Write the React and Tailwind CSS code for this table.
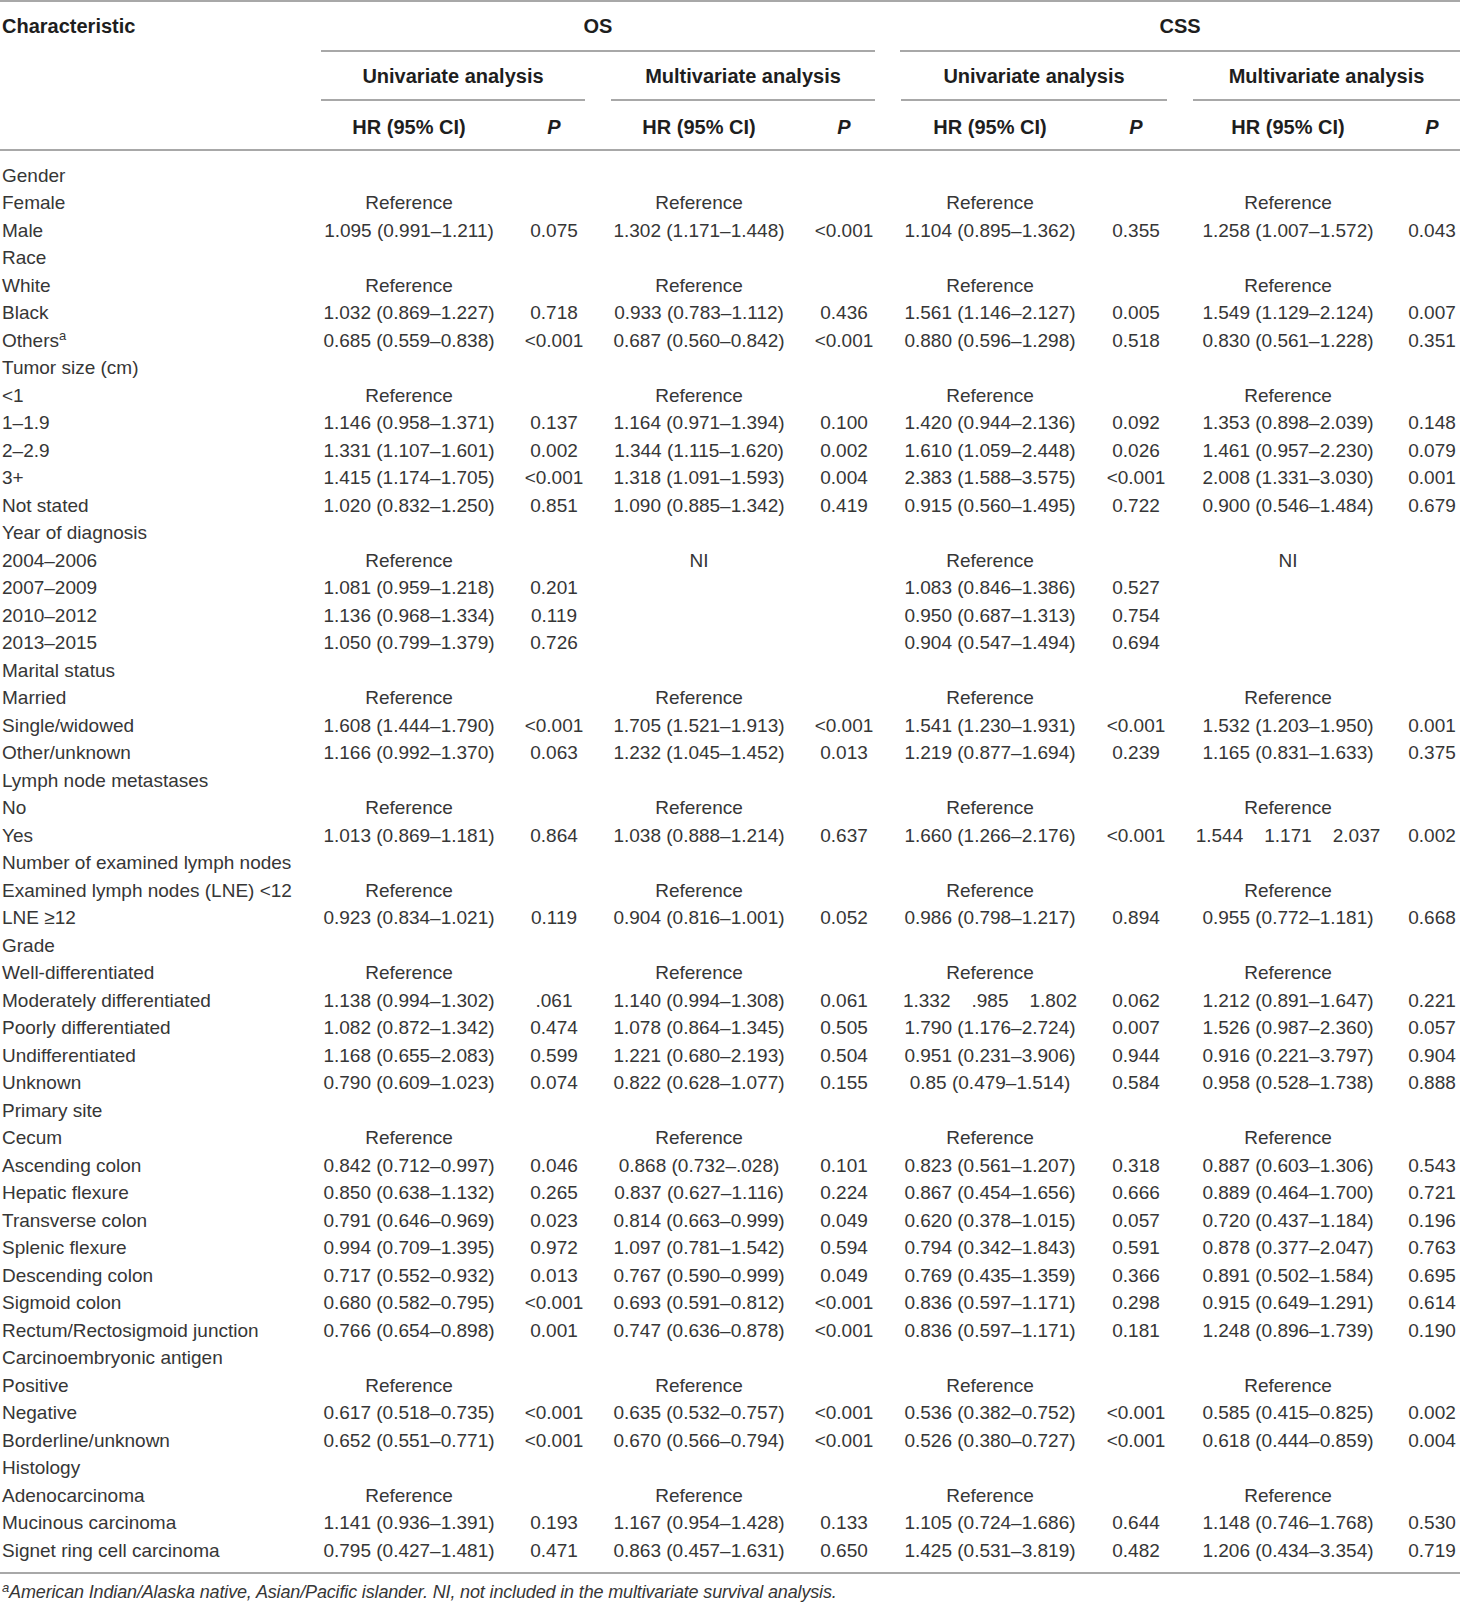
import React from 'react';

const cols = 'grid grid-cols-[308px_202px_88px_202px_88px_204px_88px_216px_64px]';

const REF = ['Reference', '', 'Reference', '', 'Reference', '', 'Reference', ''];

// label, values (null = section heading)
const rows = [
  ['Gender', null],
  ['Female', REF],
  ['Male', ['1.095 (0.991–1.211)', '0.075', '1.302 (1.171–1.448)', '<0.001', '1.104 (0.895–1.362)', '0.355', '1.258 (1.007–1.572)', '0.043']],
  ['Race', null],
  ['White', REF],
  ['Black', ['1.032 (0.869–1.227)', '0.718', '0.933 (0.783–1.112)', '0.436', '1.561 (1.146–2.127)', '0.005', '1.549 (1.129–2.124)', '0.007']],
  ['Others', ['0.685 (0.559–0.838)', '<0.001', '0.687 (0.560–0.842)', '<0.001', '0.880 (0.596–1.298)', '0.518', '0.830 (0.561–1.228)', '0.351'], 'a'],
  ['Tumor size (cm)', null],
  ['<1', REF],
  ['1–1.9', ['1.146 (0.958–1.371)', '0.137', '1.164 (0.971–1.394)', '0.100', '1.420 (0.944–2.136)', '0.092', '1.353 (0.898–2.039)', '0.148']],
  ['2–2.9', ['1.331 (1.107–1.601)', '0.002', '1.344 (1.115–1.620)', '0.002', '1.610 (1.059–2.448)', '0.026', '1.461 (0.957–2.230)', '0.079']],
  ['3+', ['1.415 (1.174–1.705)', '<0.001', '1.318 (1.091–1.593)', '0.004', '2.383 (1.588–3.575)', '<0.001', '2.008 (1.331–3.030)', '0.001']],
  ['Not stated', ['1.020 (0.832–1.250)', '0.851', '1.090 (0.885–1.342)', '0.419', '0.915 (0.560–1.495)', '0.722', '0.900 (0.546–1.484)', '0.679']],
  ['Year of diagnosis', null],
  ['2004–2006', ['Reference', '', 'NI', '', 'Reference', '', 'NI', '']],
  ['2007–2009', ['1.081 (0.959–1.218)', '0.201', '', '', '1.083 (0.846–1.386)', '0.527', '', '']],
  ['2010–2012', ['1.136 (0.968–1.334)', '0.119', '', '', '0.950 (0.687–1.313)', '0.754', '', '']],
  ['2013–2015', ['1.050 (0.799–1.379)', '0.726', '', '', '0.904 (0.547–1.494)', '0.694', '', '']],
  ['Marital status', null],
  ['Married', REF],
  ['Single/widowed', ['1.608 (1.444–1.790)', '<0.001', '1.705 (1.521–1.913)', '<0.001', '1.541 (1.230–1.931)', '<0.001', '1.532 (1.203–1.950)', '0.001']],
  ['Other/unknown', ['1.166 (0.992–1.370)', '0.063', '1.232 (1.045–1.452)', '0.013', '1.219 (0.877–1.694)', '0.239', '1.165 (0.831–1.633)', '0.375']],
  ['Lymph node metastases', null],
  ['No', REF],
  ['Yes', ['1.013 (0.869–1.181)', '0.864', '1.038 (0.888–1.214)', '0.637', '1.660 (1.266–2.176)', '<0.001', ['1.544', '1.171', '2.037'], '0.002']],
  ['Number of examined lymph nodes', null],
  ['Examined lymph nodes (LNE) <12', REF],
  ['LNE ≥12', ['0.923 (0.834–1.021)', '0.119', '0.904 (0.816–1.001)', '0.052', '0.986 (0.798–1.217)', '0.894', '0.955 (0.772–1.181)', '0.668']],
  ['Grade', null],
  ['Well-differentiated', REF],
  ['Moderately differentiated', ['1.138 (0.994–1.302)', '.061', '1.140 (0.994–1.308)', '0.061', ['1.332', '.985', '1.802'], '0.062', '1.212 (0.891–1.647)', '0.221']],
  ['Poorly differentiated', ['1.082 (0.872–1.342)', '0.474', '1.078 (0.864–1.345)', '0.505', '1.790 (1.176–2.724)', '0.007', '1.526 (0.987–2.360)', '0.057']],
  ['Undifferentiated', ['1.168 (0.655–2.083)', '0.599', '1.221 (0.680–2.193)', '0.504', '0.951 (0.231–3.906)', '0.944', '0.916 (0.221–3.797)', '0.904']],
  ['Unknown', ['0.790 (0.609–1.023)', '0.074', '0.822 (0.628–1.077)', '0.155', '0.85 (0.479–1.514)', '0.584', '0.958 (0.528–1.738)', '0.888']],
  ['Primary site', null],
  ['Cecum', REF],
  ['Ascending colon', ['0.842 (0.712–0.997)', '0.046', '0.868 (0.732–.028)', '0.101', '0.823 (0.561–1.207)', '0.318', '0.887 (0.603–1.306)', '0.543']],
  ['Hepatic flexure', ['0.850 (0.638–1.132)', '0.265', '0.837 (0.627–1.116)', '0.224', '0.867 (0.454–1.656)', '0.666', '0.889 (0.464–1.700)', '0.721']],
  ['Transverse colon', ['0.791 (0.646–0.969)', '0.023', '0.814 (0.663–0.999)', '0.049', '0.620 (0.378–1.015)', '0.057', '0.720 (0.437–1.184)', '0.196']],
  ['Splenic flexure', ['0.994 (0.709–1.395)', '0.972', '1.097 (0.781–1.542)', '0.594', '0.794 (0.342–1.843)', '0.591', '0.878 (0.377–2.047)', '0.763']],
  ['Descending colon', ['0.717 (0.552–0.932)', '0.013', '0.767 (0.590–0.999)', '0.049', '0.769 (0.435–1.359)', '0.366', '0.891 (0.502–1.584)', '0.695']],
  ['Sigmoid colon', ['0.680 (0.582–0.795)', '<0.001', '0.693 (0.591–0.812)', '<0.001', '0.836 (0.597–1.171)', '0.298', '0.915 (0.649–1.291)', '0.614']],
  ['Rectum/Rectosigmoid junction', ['0.766 (0.654–0.898)', '0.001', '0.747 (0.636–0.878)', '<0.001', '0.836 (0.597–1.171)', '0.181', '1.248 (0.896–1.739)', '0.190']],
  ['Carcinoembryonic antigen', null],
  ['Positive', REF],
  ['Negative', ['0.617 (0.518–0.735)', '<0.001', '0.635 (0.532–0.757)', '<0.001', '0.536 (0.382–0.752)', '<0.001', '0.585 (0.415–0.825)', '0.002']],
  ['Borderline/unknown', ['0.652 (0.551–0.771)', '<0.001', '0.670 (0.566–0.794)', '<0.001', '0.526 (0.380–0.727)', '<0.001', '0.618 (0.444–0.859)', '0.004']],
  ['Histology', null],
  ['Adenocarcinoma', REF],
  ['Mucinous carcinoma', ['1.141 (0.936–1.391)', '0.193', '1.167 (0.954–1.428)', '0.133', '1.105 (0.724–1.686)', '0.644', '1.148 (0.746–1.768)', '0.530']],
  ['Signet ring cell carcinoma', ['0.795 (0.427–1.481)', '0.471', '0.863 (0.457–1.631)', '0.650', '1.425 (0.531–3.819)', '0.482', '1.206 (0.434–3.354)', '0.719']],
];

const Cell = ({ value, last }) => {
  if (Array.isArray(value)) {
    return (
      <div className="flex justify-center gap-[21px]">
        {value.map((v) => (
          <span key={v}>{v}</span>
        ))}
      </div>
    );
  }
  return <div className={`text-center whitespace-nowrap ${last ? 'pl-[8px]' : ''}`}>{value}</div>;
};

const Line = () => <div className="h-[2px] bg-[#a8a8a8]" />;

export default function App() {
  return (
    <div className="w-[1460px] h-[1604px] bg-white text-[#363636] font-['Liberation_Sans',Arial,sans-serif] overflow-hidden">
      <Line />

      {/* Header */}
      <div className="font-bold text-[20px] text-[#1e1e1e]">
        <div className={`${cols} h-[50px]`}>
          <div className="flex items-center pl-[2px] pb-[2px]">Characteristic</div>
          <div className="col-span-4 flex flex-col px-[13px]">
            <div className="flex-1 flex items-center justify-center">OS</div>
            <Line />
          </div>
          <div className="col-span-4 flex flex-col pl-[12px]">
            <div className="flex-1 flex items-center justify-center">CSS</div>
            <Line />
          </div>
        </div>

        <div className={`${cols} h-[49px]`}>
          <div />
          <div className="col-span-2 flex flex-col px-[13px]">
            <div className="flex-1 flex items-center justify-center">Univariate analysis</div>
            <Line />
          </div>
          <div className="col-span-2 flex flex-col px-[13px]">
            <div className="flex-1 flex items-center justify-center">Multivariate analysis</div>
            <Line />
          </div>
          <div className="col-span-2 flex flex-col px-[13px]">
            <div className="flex-1 flex items-center justify-center">Univariate analysis</div>
            <Line />
          </div>
          <div className="col-span-2 flex flex-col pl-[13px]">
            <div className="flex-1 flex items-center justify-center">Multivariate analysis</div>
            <Line />
          </div>
        </div>

        <div className={`${cols} h-[48px] items-center pt-[3px]`}>
          <div />
          <div className="text-center">HR (95% CI)</div>
          <div className="text-center italic">P</div>
          <div className="text-center">HR (95% CI)</div>
          <div className="text-center italic">P</div>
          <div className="text-center">HR (95% CI)</div>
          <div className="text-center italic">P</div>
          <div className="text-center">HR (95% CI)</div>
          <div className="text-center italic pl-[8px]">P</div>
        </div>
      </div>
      <Line />

      {/* Body */}
      <div className="pt-[11px] pb-[7px] text-[19px]">
        {rows.map(([label, values, sup]) => (
          <div key={label} className={`${cols} h-[27.5px] items-center leading-[22px]`}>
            <div className="pl-[2px] whitespace-nowrap">
              {label}
              {sup && <sup className="text-[13px] -top-[7px]">{sup}</sup>}
            </div>
            {values &&
              values.map((v, i) => <Cell key={i} value={v} last={i === 7} />)}
          </div>
        ))}
      </div>
      <Line />

      <p className="pt-[7px] pl-[2px] text-[18px] leading-[22px] italic whitespace-nowrap tracking-[-0.15px]">
        <sup className="text-[13px] -top-[6px]">a</sup>American Indian/Alaska native, Asian/Pacific islander. NI, not included in the multivariate survival analysis.
      </p>
    </div>
  );
}
